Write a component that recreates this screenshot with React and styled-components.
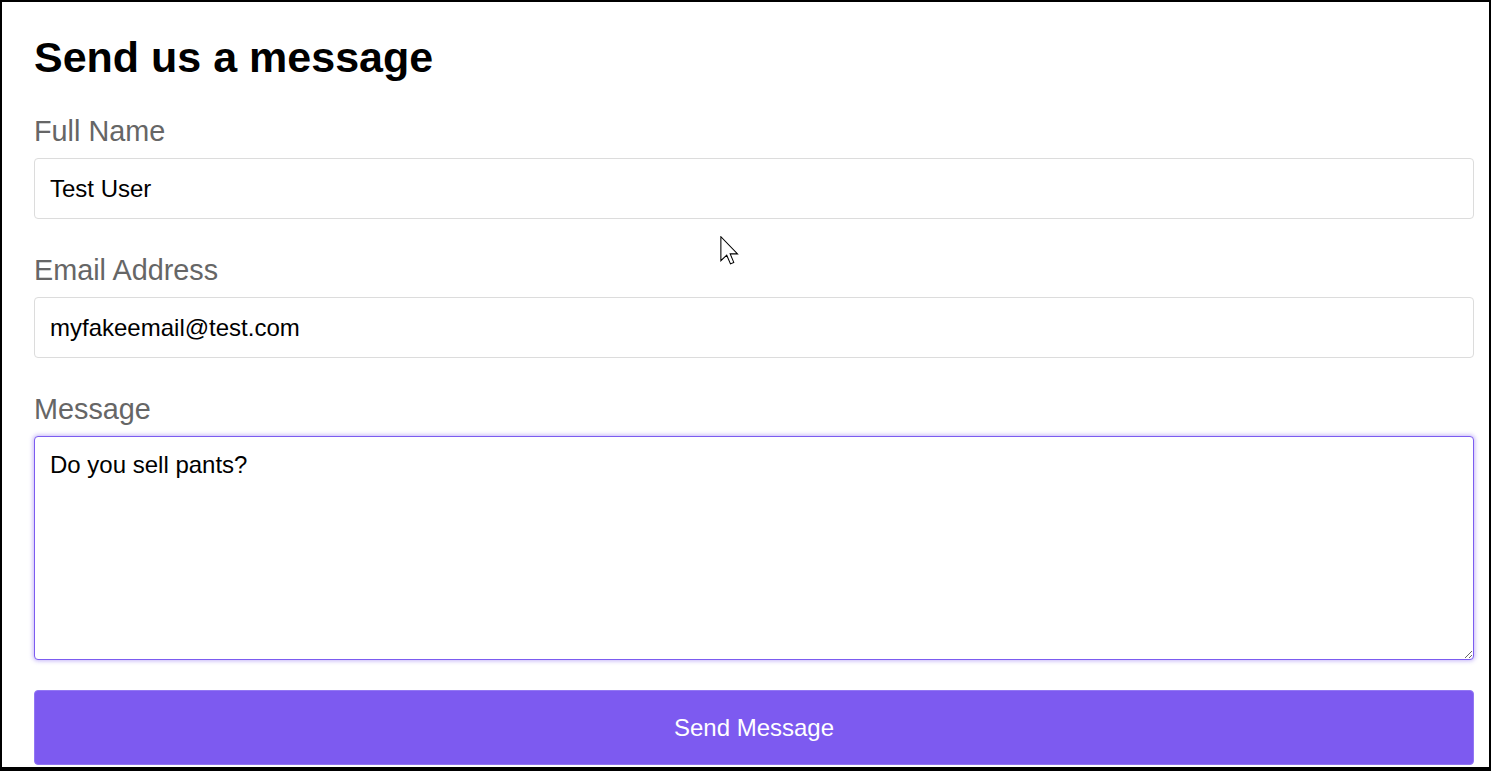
import React from 'react'
import styled, { createGlobalStyle } from 'styled-components'

const GlobalStyle = createGlobalStyle`
  html, body {
    margin: 0;
    padding: 0;
    background: #fff;
  }
  body {
    font-family: "Liberation Sans", Arial, sans-serif;
  }
`

const Frame = styled.div`
  position: relative;
  width: 1491px;
  height: 771px;
  box-sizing: border-box;
  border: 2px solid #000;
  border-bottom-width: 4px;
  overflow: hidden;
  background: #fff;
`

const Form = styled.form`
  display: flex;
  flex-direction: column;
  padding: 34px 15px 0 32px;
`

const Title = styled.h1`
  margin: 0 0 36px;
  font-size: 43px;
  line-height: 43px;
  font-weight: 700;
  color: #000;
`

const Field = styled.div`
  display: flex;
  flex-direction: column;
  margin-bottom: 35px;
`

const Label = styled.label`
  font-size: 28.8px;
  line-height: 32px;
  color: #666;
  margin-bottom: 11px;
`

const Input = styled.input`
  box-sizing: border-box;
  width: 100%;
  height: 61px;
  padding: 0 15px;
  border: 1px solid #dcdcdc;
  border-radius: 4px;
  font-family: "Liberation Sans", Arial, sans-serif;
  font-size: 24px;
  color: #000;
  background: #fff;
  outline: none;
`

const TextArea = styled.textarea`
  box-sizing: border-box;
  width: 100%;
  height: 224px;
  padding: 14px 15px;
  border: 1px solid #7c5cf0;
  border-radius: 4px;
  box-shadow: 0 0 4px 1px rgba(124, 92, 240, 0.45);
  font-family: "Liberation Sans", Arial, sans-serif;
  font-size: 24px;
  color: #000;
  background: #fff;
  outline: none;
  resize: vertical;
`

const SendButton = styled.button`
  height: 75px;
  margin-top: -5px;
  border: 1px solid #9277f3;
  border-radius: 4px;
  background: #7d5af0;
  color: #fff;
  font-family: "Liberation Sans", Arial, sans-serif;
  font-size: 24px;
  cursor: pointer;
`

const Pointer = styled.svg`
  position: absolute;
  left: 718px;
  top: 234px;
  pointer-events: none;
`

const fields = [
  { id: 'name', label: 'Full Name', value: 'Test User' },
  { id: 'email', label: 'Email Address', value: 'myfakeemail@test.com' },
]

const App = () => {
  return (
    <Frame>
      <GlobalStyle />
      <Form onSubmit={(e) => e.preventDefault()}>
        <Title>Send us a message</Title>
        {fields.map((f) => (
          <Field key={f.id}>
            <Label htmlFor={f.id}>{f.label}</Label>
            <Input id={f.id} defaultValue={f.value} />
          </Field>
        ))}
        <Field>
          <Label htmlFor="message">Message</Label>
          <TextArea id="message" defaultValue="Do you sell pants?" />
        </Field>
        <SendButton type="submit">Send Message</SendButton>
      </Form>
      <Pointer width="19" height="30" viewBox="0 0 12.5 20">
        <path
          d="M0.5 0.5 L0.5 16.5 L4.4 12.8 L6.9 18.6 L9.1 17.6 L6.7 11.9 L11.6 11.9 Z"
          fill="#fff"
          stroke="#000"
          strokeWidth="0.7"
          strokeLinejoin="miter"
        />
      </Pointer>
    </Frame>
  )
}

export default App
